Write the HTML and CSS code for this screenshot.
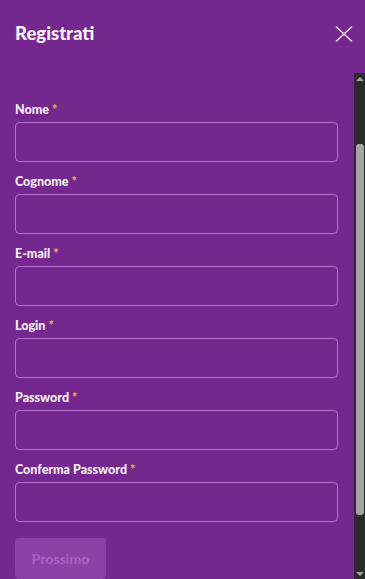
FILE: index.html
```html
<!DOCTYPE html>
<html lang="it">
<head>
<meta charset="utf-8">
<title>Registrati</title>
<link rel="stylesheet" href="styles.css">
</head>
<body>
<div class="panel">
  <header class="header">
    <h1 class="title">Registrati</h1>
    <button class="close" aria-label="Chiudi">
      <svg width="18" height="16" viewBox="0 0 18 16" fill="none" stroke="#f3dcf3" stroke-width="1.6" stroke-linecap="round">
        <path d="M1.5 1 L16.5 15 M16.5 1 L1.5 15"/>
      </svg>
    </button>
  </header>
  <div class="body">
    <form class="form">
      <div class="field">
        <label class="label">Nome <span class="req">*</span></label>
        <input class="input" type="text">
      </div>
      <div class="field">
        <label class="label">Cognome <span class="req">*</span></label>
        <input class="input" type="text">
      </div>
      <div class="field">
        <label class="label">E-mail <span class="req">*</span></label>
        <input class="input" type="email">
      </div>
      <div class="field">
        <label class="label">Login <span class="req">*</span></label>
        <input class="input" type="text">
      </div>
      <div class="field">
        <label class="label">Password <span class="req">*</span></label>
        <input class="input" type="password">
      </div>
      <div class="field">
        <label class="label">Conferma Password <span class="req">*</span></label>
        <input class="input" type="password">
      </div>
      <button class="next" type="button" disabled>Prossimo</button>
    </form>
    <div class="scrollbar" aria-hidden="true">
      <div class="sb-btn"><span class="tri-up"></span></div>
      <div class="sb-track">
        <div class="sb-thumb"></div>
      </div>
      <div class="sb-btn"><span class="tri-down"></span></div>
    </div>
  </div>
</div>
</body>
</html>
```
FILE: styles.css
```css
* { box-sizing: border-box; }
html, body { margin: 0; padding: 0; }
body {
  width: 365px;
  height: 579px;
  overflow: hidden;
  background: #74288f;
  font-family: Lato, "Noto Sans", sans-serif;
  color: #f7ecf7;
}
.panel {
  display: flex;
  flex-direction: column;
  height: 579px;
}
.header {
  height: 73px;
  flex: none;
  display: flex;
  justify-content: space-between;
  align-items: flex-start;
  padding: 21px 12px 0 15px;
}
.title {
  margin: 0;
  font-size: 18.5px;
  line-height: 24px;
  font-weight: 900;
  color: #fbf1fb;
  letter-spacing: 0;
}
.close {
  background: none;
  border: 0;
  padding: 0;
  margin-top: 5px;
  width: 18px;
  height: 16px;
  display: flex;
}
.body {
  flex: 1;
  display: flex;
  min-height: 0;
}
.form {
  flex: 1;
  display: flex;
  flex-direction: column;
  gap: 10px;
  padding: 27px 16px 0 15px;
  overflow: hidden;
}
.field {
  display: flex;
  flex-direction: column;
}
.label {
  font-size: 12.5px;
  line-height: 16px;
  font-weight: 900;
  padding-top: 2px;
  margin-bottom: 4px;
  color: #f8edf8;
}
.req {
  color: #f4a94a;
}
.input {
  height: 40px;
  width: 100%;
  background: transparent;
  border: 1px solid #b46fd0;
  border-radius: 4px;
  font: inherit;
  color: #fff;
  padding: 0 10px;
  outline: none;
}
.next {
  margin-top: 6px;
  align-self: flex-start;
  width: 91px;
  height: 41px;
  flex: none;
  border: 0;
  border-radius: 4px;
  background: #8b3fa7;
  color: #a761c0;
  font-family: Lato, "Noto Sans", sans-serif;
  font-size: 14px;
  font-weight: 900;
}
.scrollbar {
  width: 11px;
  flex: none;
  background: #2b2b2b;
  display: flex;
  flex-direction: column;
}
.sb-btn {
  height: 11px;
  flex: none;
  display: flex;
  align-items: center;
  justify-content: center;
}
.tri-up, .tri-down {
  width: 0;
  height: 0;
  border-left: 4px solid transparent;
  border-right: 4px solid transparent;
}
.tri-up { border-bottom: 4px solid #a3a3a3; }
.tri-down { border-top: 4px solid #a3a3a3; }
.sb-track {
  flex: 1;
  display: flex;
  flex-direction: column;
  padding: 60px 1px 53px 2px;
}
.sb-thumb {
  flex: 1;
  background: #a5a5a5;
  border-radius: 3px;
}
```
